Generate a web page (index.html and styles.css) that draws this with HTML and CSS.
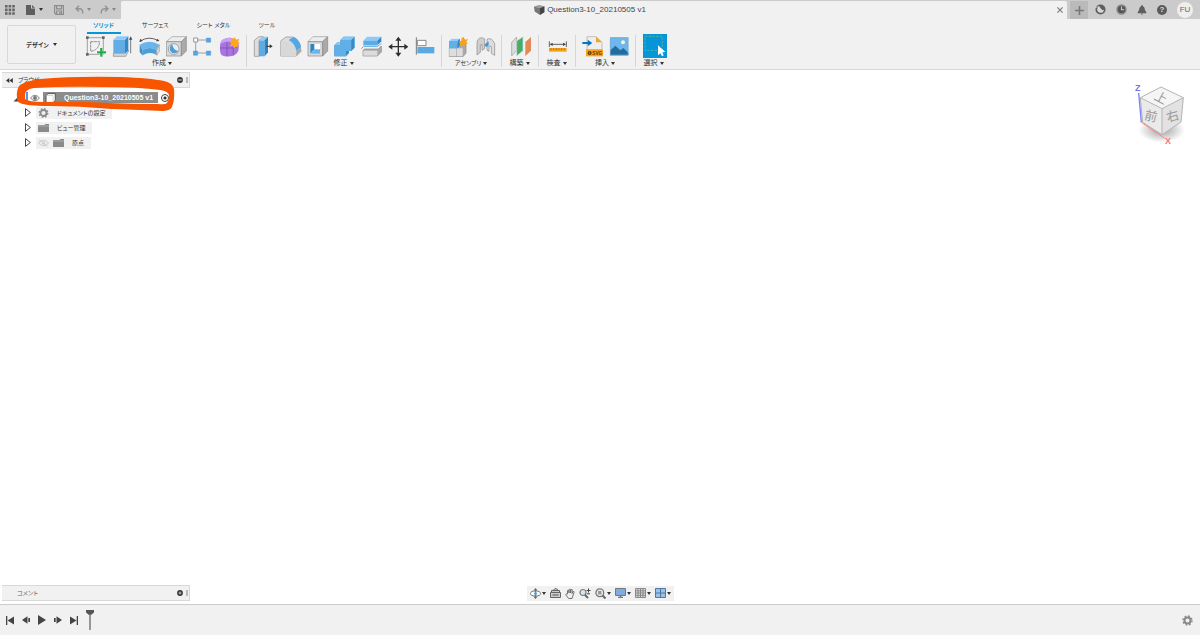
FILE: index.html
```html
<!DOCTYPE html>
<html lang="ja">
<head>
<meta charset="utf-8">
<meta name="viewport" content="width=device-width, initial-scale=1">
<title>Question3-10_20210505 v1</title>
<link rel="stylesheet" href="styles.css">
</head>
<body>
<header class="topbar">
  <div class="quick">
    <button class="ib" aria-label="データ パネル"><svg width="10" height="10" viewBox="0 0 10 10" fill="#666"><path d="M0 0h2.6v2.6H0zM3.6 0h2.6v2.6H3.6zM7.2 0h2.6v2.6H7.2zM0 3.6h2.6v2.6H0zM3.6 3.6h2.6v2.6H3.6zM7.2 3.6h2.6v2.6H7.2zM0 7.2h2.6v2.6H0zM3.6 7.2h2.6v2.6H3.6zM7.2 7.2h2.6v2.6H7.2z"/></svg></button>
    <button class="ib file" aria-label="ファイル"><svg width="9" height="10" viewBox="0 0 9 10" fill="#5e5e5e"><path d="M0 0h5v3.5h4V10H0zM6 0l3 2.8H6z"/></svg><i class="caret"></i></button>
    <button class="ib save" aria-label="保存"><svg width="10" height="10" viewBox="0 0 10 10"><path d="M1 .6h8.4v8.8H2L.6 8V.6zM2.6.6v3.2h4.8V.6M2.6 9.4V6h4.8v3.4M5.8 7v2" fill="none" stroke="#8c8c8c" stroke-width="1.2"/></svg></button>
    <button class="ib" aria-label="元に戻す"><svg width="9" height="9" viewBox="0 0 9 9" fill="none" stroke="#929292" stroke-width="1.4"><path d="M1 3.7h3.6q3.2 0 3.2 4.8M4 .8L1 3.7l3 2.9"/></svg><i class="caret pale"></i></button>
    <button class="ib" aria-label="やり直し"><svg width="9" height="9" viewBox="0 0 9 9" fill="none" stroke="#929292" stroke-width="1.4"><path d="M8 3.7H4.4Q1.2 3.7 1.2 8.5M5 .8l3 2.9-3 2.9"/></svg><i class="caret pale"></i></button>
  </div>
  <div class="doc-tab">
    <span class="doc-title"><svg width="11" height="10" viewBox="0 0 11 10"><path d="M0 1.5L5 0l5.5 1.2L6 3z" fill="#999"/><path d="M0 1.5L6 3v7L.6 6.6z" fill="#777"/><path d="M6 3l4.5-1.8v6L6 10z" fill="#444"/></svg>Question3-10_20210505 v1</span>
    <button class="ib close" aria-label="閉じる"><svg width="6" height="6" viewBox="0 0 6 6" stroke="#777" stroke-width="1.1"><path d="M.4.4l5.2 5.2M5.6.4L.4 5.6"/></svg></button>
  </div>
  <div class="account">
    <button class="ib add" aria-label="新規デザイン"><svg width="9" height="9" viewBox="0 0 9 9" stroke="#777" stroke-width="1.6"><path d="M4.5 0v9M0 4.5h9"/></svg></button>
    <button class="ib" aria-label="拡張機能"><svg width="11" height="11" viewBox="0 0 11 11"><circle cx="5.5" cy="5.5" r="4.2" fill="#d8d8d8" stroke="#5e5e5e" stroke-width="1.7"/><path d="M4 1l5 1 1 3.2-2.5 1L5.3 4z" fill="#5e5e5e"/><path d="M1.5 3.5L4 2.6" stroke="#ccc"/></svg></button>
    <button class="ib" aria-label="ジョブ ステータス"><svg width="11" height="11" viewBox="0 0 11 11"><circle cx="5.5" cy="5.5" r="4.5" fill="#555" stroke="#8c8c8c" stroke-width="1.4"/><path d="M5.5 2.6v3.2h2.6" fill="none" stroke="#ccc" stroke-width="1.1"/></svg></button>
    <button class="ib" aria-label="通知"><svg width="10" height="10" viewBox="0 0 10 10" fill="#5e5e5e"><path d="M5 0q.8 0 .8 1Q7.8 1.800 8 5l1.400 2.600v.6H.6v-.6L2 5q.2-3.200 2.200-4Q4.200 0 5 0zM3.800 8.800h2.400Q5 10.600 3.800 8.800z"/></svg></button>
    <button class="ib help" aria-label="ヘルプ">?</button>
    <button class="ib avatar" aria-label="アカウント">FU</button>
  </div>
</header>

<section class="ribbon">
  <button class="workspace">デザイン<i class="caret"></i></button>
  <div class="tools">
    <nav class="tabs">
      <button class="tab active">ソリッド</button>
      <button class="tab">サーフェス</button>
      <button class="tab">シート メタル</button>
      <button class="tab">ツール</button>
    </nav>
    <div class="groups">
      <div class="group">
        <div class="icons">
          <button class="tool" aria-label="スケッチを作成"><svg viewBox="255 102 66 66"><path d="M262 110h48v50h-48z" fill="none" stroke="#777" stroke-width="2"/><path d="M272 122v29q24-3 27-29z" fill="none" stroke="#777" stroke-width="2.500" stroke-dasharray="8 2"/><path d="M258 106h8v8h-8zM306 106h8v8h-8zM258 156h8v8h-8z" fill="#666"/><path d="M304 141v27M290 154h28" stroke="#fff" stroke-width="10"/><path d="M304 141v26M291 154h27" stroke="#25a84a" stroke-width="7"/></svg></button>
          <button class="tool" aria-label="押し出し"><svg viewBox="336 102 66 66"><path d="M340 158l10-9h36l-9 17h-37z" fill="#d4d4d4" stroke="#888" stroke-width="2"/><path d="M340 116h35v42h-35z" fill="#62ade5"/><path d="M340 116l11-10h34l-10 10z" fill="#8acbfa"/><path d="M375 116l10-10v42l-10 10z" fill="#3289c6"/><path d="M392 114v43" stroke="#444" stroke-width="2"/><path d="M392 106l5 10h-10z" fill="#444"/></svg></button>
          <button class="tool" aria-label="回転"><svg viewBox="417 102 66 66"><path d="M420 121q26-18 55-2" fill="none" stroke="#444" stroke-width="2.500"/><path d="M418 123l3-10 7 7zM478 120l-10 1 5-8z" fill="#444"/><path d="M419 131q29-18 59 0l-8 16q-22-12-42 0z" fill="#68b4eb"/><path d="M419 131l9 16v17l-9-11z" fill="#428fc8"/><path d="M428 147q20-12 42 0v15q-20-12-42 1z" fill="#4a9fd9"/><path d="M470 147l8-16v20l-8 12z" fill="#ddd" stroke="#999" stroke-width="2"/></svg></button>
          <button class="tool" aria-label="穴"><svg viewBox="498 102 66 66"><path d="M499 122l17-15h43l-15 15z" fill="#ededed" stroke="#999" stroke-width="2"/><path d="M499 122h45v43h-45z" fill="#d7d7d7" stroke="#888" stroke-width="2"/><path d="M544 122l15-15v43l-15 15z" fill="#aaa" stroke="#888" stroke-width="2"/><circle cx="521" cy="144" r="16" fill="#eee" stroke="#888" stroke-width="2"/><path d="M517 130q2 18 18 20A14 14 0 1 1 517 130z" fill="#4b9eda"/></svg></button>
          <button class="tool" aria-label="パターン"><svg viewBox="579 102 66 66"><path d="M593 117h26M587 124v27M593 156h26" stroke="#777" stroke-width="2"/><path d="M581 111h12v12h-12z" fill="#fff" stroke="#666" stroke-width="2"/><path d="M619 111h13v13h-13zM580 150h13v13h-13zM619 150h13v13h-13z" fill="#55a7e3" stroke="#3286bf"/></svg></button>
          <button class="tool" aria-label="フォームを作成"><svg viewBox="660 102 66 66"><path d="M668 116q19-10 35-2 12 3 13 18 3 24-14 31-20 7-37 0-6-5-5-24 0-19 8-23z" fill="#a874df"/><path d="M668 116q15-9 32-3l-5 10q-17-4-33 5 1-9 6-12z" fill="#c9a1f5"/><path d="M660 141h40l16-6M681 124v42M700 122v42" fill="none" stroke="#7747ae" stroke-width="2"/><path d="M704 107l4 9 10-3-4 10 5 3-6 5 3 8-9-2-5 6-3-8-10 1 5-9-6-5 8-3-2-9 8 4z" fill="#ffa51f"/></svg></button>
        </div>
        <button class="label">作成<i class="caret"></i></button>
      </div>
      <div class="group">
        <div class="icons">
          <button class="tool" aria-label="プレス/プル"><svg viewBox="39 102 66 66"><path d="M43 118l13-11h14l-13 11v48H43z" fill="#dedede" stroke="#888" stroke-width="2"/><path d="M57 118h17v48H57z" fill="#5babe4"/><path d="M57 118l13-11h14l-10 11z" fill="#8acbfa"/><path d="M74 118l10-11v47l-10 12z" fill="#2d84bf"/><path d="M79 136h12" stroke="#333" stroke-width="3"/><path d="M98 136l-9-6v12z" fill="#333"/></svg></button>
          <button class="tool" aria-label="フィレット"><svg viewBox="120 102 66 66"><path d="M122 120l16-12h17q27 4 28 43l-14 14h-47z" fill="#ddd" stroke="#888" stroke-width="2"/><path d="M122 120h18q26 4 29 30v15h-47z" fill="#d8d8d8"/><path d="M146 117l15-10q20 11 22 32l-14 10q-4-22-23-32z" fill="#54a7e5"/><path d="M169 149l14-10v12l-14 14z" fill="#aaa"/></svg></button>
          <button class="tool" aria-label="シェル"><svg viewBox="201 102 66 66"><path d="M204 122l15-15h44l-15 15z" fill="#eee" stroke="#999" stroke-width="2"/><path d="M204 122h44v43h-44z" fill="#d8d8d8" stroke="#888" stroke-width="2"/><path d="M248 122l15-15v43l-15 15z" fill="#aaa" stroke="#888" stroke-width="2"/><path d="M211 129h29v29h-29z" fill="#fff"/><path d="M211 129h12v16l-12 13z" fill="#2f85c2"/><path d="M211 158l12-13h17v13z" fill="#67b5ee"/></svg></button>
          <button class="tool" aria-label="結合"><svg viewBox="282 102 66 66"><path d="M283 133l10-10h8v-6l10-10h33v33l-10 10h-7v6l-9 10h-35z" fill="#348bc9"/><path d="M283 133h18v-16h33v33h-16v16h-35z" fill="#61afe7"/><path d="M301 117l10-10h33l-10 10zM283 133l10-10h8v10z" fill="#86c7f7"/></svg></button>
          <button class="tool" aria-label="面を分割"><svg viewBox="363 102 66 66"><path d="M370 119l11-12h43l-12 12z" fill="#8acbfa"/><path d="M370 119h42v14h-42z" fill="#5dabe4"/><path d="M412 119l12-12v14l-12 12z" fill="#3188c6"/><path d="M364 143l7-7h42l11-9" fill="none" stroke="#5dabe4" stroke-width="3"/><path d="M369 149l4-5h42l9-9v18l-12 12h-43z" fill="#aaa" stroke="#888" stroke-width="2"/><path d="M370 149h42v15h-42z" fill="#dcdcdc"/></svg></button>
          <button class="tool" aria-label="移動"><svg viewBox="444 102 66 66"><path d="M475 116v42M454 137h42" stroke="#2e2e2e" stroke-width="4"/><path d="M475 107l9 12h-18zM475 167l-9-12h18zM445 137l12-9v18zM505 137l-12-9v18z" fill="#2e2e2e"/></svg></button>
          <button class="tool" aria-label="位置合わせ"><svg viewBox="525 102 66 66"><path d="M529 109v52" stroke="#777" stroke-width="3"/><path d="M532 118h26v16h-26z" fill="#fff" stroke="#888" stroke-width="3"/><path d="M532 138h51v19h-51z" fill="#58a9e4"/></svg></button>
        </div>
        <button class="label">修正<i class="caret"></i></button>
      </div>
      <div class="group">
        <div class="icons">
          <button class="tool" aria-label="新規コンポーネント"><svg viewBox="24 102 66 66"><path d="M28 142l8-12h42v26l-9 11H28z" fill="#aaa" stroke="#888" stroke-width="2"/><path d="M28 142h20v24H28zM50 142h18v24H50z" fill="#ddd"/><path d="M27 120h25v22H27z" fill="#62afe7"/><path d="M27 120l8-7h25l-8 7z" fill="#91ceff"/><path d="M52 120l8-7v21l-8 8z" fill="#3288c5"/><path d="M71 108l4 8 9-2-5 9 5 5-9 2-2 8-7-5-8 3 2-9-4-5 8-3 1-8z" fill="#f5a21f"/></svg></button>
          <button class="tool" aria-label="ジョイント"><svg viewBox="105 102 66 66"><path d="M111 126q0-14 14-16l9 4v29l-8 5v-18l-5 2v22l-10 8z" fill="#cfcfcf" stroke="#888" stroke-width="2"/><path d="M142 114q14-5 22 14v35l-10-6v-20l-7-2v16l-6-3z" fill="#ddd" stroke="#888" stroke-width="2"/><path d="M133 133l6-8 7-3v11l-7 5z" fill="#4298d5"/></svg></button>
        </div>
        <button class="label kana">アセンブリ<i class="caret"></i></button>
      </div>
      <div class="group">
        <div class="icons">
          <button class="tool" aria-label="オフセット平面"><svg viewBox="208 102 66 66"><path d="M213 124l15-16v40l-15 17z" fill="#ddd" stroke="#999" stroke-width="2"/><path d="M228 120l19-13v42l-19 16z" fill="#43ad69" stroke="#ddd" stroke-width="2"/><path d="M254 123l17-15v41l-17 16z" fill="#e18a58"/></svg></button>
        </div>
        <button class="label">構築<i class="caret"></i></button>
      </div>
      <div class="group">
        <div class="icons">
          <button class="tool" aria-label="計測"><svg viewBox="321 102 66 66"><path d="M328 121v17M379 121v17M332 130h43" stroke="#444" stroke-width="2.500"/><path d="M329 130l9-5v10zM378 130l-9-5v10z" fill="#444"/><path d="M327 141h53v11h-53z" fill="#f2a21d"/><path d="M333 142v5M341 142v4M349 142v5M357 142v4M365 142v5M373 142v4" stroke="#865411" stroke-width="2"/></svg></button>
        </div>
        <button class="label">検査<i class="caret"></i></button>
      </div>
      <div class="group">
        <div class="icons">
          <button class="tool" aria-label="SVGを挿入"><svg viewBox="429 102 66 66"><path d="M444 107h27l18 17v22h-45z" fill="#eee" stroke="#aaa" stroke-width="2"/><path d="M471 107v17h18z" fill="#f4a321"/><path d="M430 126h17" stroke="#0876bd" stroke-width="6"/><path d="M460 126l-14-10v20z" fill="#0876bd"/><path d="M441 145h51v21h-51z" fill="#f6a21d"/><circle cx="452" cy="156" r="4" fill="none" stroke="#5b3a08" stroke-width="4"/><text x="460" y="161" class="svg-mark">SVG</text></svg></button>
          <button class="tool" aria-label="キャンバス"><svg viewBox="510 102 66 66"><path d="M513 109h55v54h-55z" fill="#6db7ee"/><circle cx="552" cy="124" r="6" fill="#fff3bd"/><path d="M513 149l16-15 15 14 9-7 15 14v8h-55z" fill="#236c9e"/><path d="M514 110h53v52h-53z" fill="none" stroke="#77a9cc" stroke-width="2"/></svg></button>
        </div>
        <button class="label">挿入<i class="caret"></i></button>
      </div>
      <div class="group last">
        <div class="icons">
          <button class="tool select" aria-label="選択ツール"><svg viewBox="610 100 72 72"><path d="M616 107h52v42h-52z" fill="none" stroke="#54b99c" stroke-width="2.500" stroke-dasharray="7 4"/><path d="M655 134v30l7-6 5 9 5-3-4-9 9-1z" fill="#fff"/></svg></button>
        </div>
        <button class="label">選択<i class="caret"></i></button>
      </div>
    </div>
  </div>
</section>

<main class="canvas">
  <aside class="browser">
    <div class="panel">
      <button class="ib" aria-label="折りたたむ"><svg width="7" height="5" viewBox="0 0 7 5" fill="#333"><path d="M3.300 0v5L0 2.500zM6.800 0v5L3.500 2.500z"/></svg></button>
      <span class="panel-name">ブラウザ</span>
      <button class="ib" aria-label="表示を縮小"><svg width="6" height="6" viewBox="0 0 6 6"><circle cx="3" cy="3" r="2.900" fill="#333"/><path d="M1.300 3h3.400" stroke="#ddd"/></svg></button>
      <i class="grip"></i>
    </div>
    <ul class="tree">
      <li class="root">
        <svg width="8" height="8" viewBox="0 0 8 8"><path d="M7.500.5v7H.5z" fill="#444"/></svg>
        <i class="mark"></i>
        <svg width="10" height="8" viewBox="0 0 10 8"><path d="M.5 4q4.500-5.500 9 0-4.500 5.500-9 0z" fill="#eee" stroke="#888"/><circle cx="5" cy="4" r="1.900" fill="#777"/></svg>
        <span class="doc-node"><svg width="11" height="10" viewBox="0 0 11 10"><path d="M1 2.500L3 .6h7.300v6.600L8.400 9.500H1z" fill="#fff" stroke="#555"/><path d="M1 2.500h7.200v7" fill="none" stroke="#bbb" stroke-width=".6"/></svg>Question3-10_20210505 v1</span>
        <input type="radio" aria-label="コンポーネントをアクティブ化" checked>
      </li>
      <li>
        <svg width="6" height="9" viewBox="0 0 6 9"><path d="M.5.6v7.800L5.400 4.500z" fill="#fff" stroke="#444"/></svg>
        <span class="node"><svg width="11" height="10" viewBox="0 0 11 10"><circle cx="5.500" cy="5" r="3" fill="none" stroke="#8c8c8c" stroke-width="1.800"/><circle cx="5.500" cy="5" r="4.300" fill="none" stroke="#8c8c8c" stroke-width="1.300" stroke-dasharray="1.700 1.677"/></svg><span class="wide">ドキュメントの設定</span></span>
      </li>
      <li>
        <svg width="6" height="9" viewBox="0 0 6 9"><path d="M.5.6v7.800L5.400 4.500z" fill="#fff" stroke="#444"/></svg>
        <span class="node"><svg width="11" height="8" viewBox="0 0 11 8"><path d="M0 1h6.500l1-1H11v8H0z" fill="#8a8a8a"/><path d="M0 2h11" stroke="#bbb" stroke-width=".7"/></svg><span class="wide">ビュー管理</span></span>
      </li>
      <li>
        <svg width="6" height="9" viewBox="0 0 6 9"><path d="M.5.6v7.800L5.400 4.500z" fill="#fff" stroke="#444"/></svg>
        <span class="node"><svg width="11" height="8" viewBox="0 0 11 8" fill="none" stroke="#ccc"><path d="M.5 4q5-5.500 10 0-5 5.500-10 0zM1 .6l8.500 7"/><circle cx="5.500" cy="4" r="1.300"/></svg><svg class="second" width="11" height="8" viewBox="0 0 11 8"><path d="M0 1h6.500l1-1H11v8H0z" fill="#8a8a8a"/><path d="M0 2h11" stroke="#bbb" stroke-width=".7"/></svg><span class="wide">原点</span></span>
      </li>
    </ul>
    <svg class="marker" width="162" height="38" viewBox="0 0 162 38"><path fill-rule="evenodd" fill="#f75500" d="M3 23Q2 14 6 10Q12 6 26 4Q60 1 106 2Q136 3 150 6Q159 8 160 14Q161 24 158 32Q156 36 148 36Q128 35 98 34Q66 31 34 31Q12 31 6 28Q3 27 3 23ZM11 19Q12 14 20 13Q50 11 90 12Q124 12 146 15Q154 16 155 20Q155 25 153 28Q151 30 144 29Q120 29 94 28Q60 26 30 27Q14 27 11 24Z"/></svg>
  </aside>

  <svg class="cube" width="56" height="70" viewBox="0 0 168 210">
    <defs><radialGradient id="shade"><stop offset="0" stop-color="#777" stop-opacity=".7"/><stop offset="1" stop-color="#777" stop-opacity="0"/></radialGradient></defs>
    <ellipse cx="86" cy="144" rx="70" ry="38" fill="url(#shade)"/>
    <path d="M22 47l62-32 67 32-64 33z" fill="#f5f5f5"/>
    <path d="M22 47l65 33v78l-58-37z" fill="#eaeaea"/>
    <path d="M87 80l64-33-7 73-57 38z" fill="#e2e2e2"/>
    <path d="M22 47l62-32 67 32-7 73-57 38-58-37zM22 47l65 33 64-33M87 80v78" fill="none" stroke="#b4b4b4" stroke-width="3"/>
    <path d="M17 33l8 88" stroke="#8080ff" stroke-width="4"/>
    <path d="M25 121l70 48" stroke="#ff8585" stroke-width="3"/>
    <g class="face"><text transform="translate(84 48) rotate(28)" y="13">上</text><text transform="translate(54 103) rotate(14)" y="13">前</text><text transform="translate(119 103) rotate(-16)" y="13">右</text></g>
    <text class="axis" x="14" y="27" fill="#7474ee">Z</text><text class="axis" x="105" y="186" fill="#f77474">X</text>
  </svg>

  <footer class="canvas-foot">
    <div class="panel comment">
      <span class="panel-name">コメント</span>
      <button class="ib" aria-label="コメントを追加"><svg width="6" height="6" viewBox="0 0 6 6"><circle cx="3" cy="3" r="2.900" fill="#333"/><path d="M1.500 3h3M3 1.500v3" stroke="#ddd" stroke-width=".8"/></svg></button>
      <i class="grip"></i>
    </div>
    <div class="navbar">
      <button class="ib" aria-label="オービット"><svg width="11" height="11" viewBox="0 0 11 11"><ellipse cx="5.500" cy="5.500" rx="5" ry="2.500" fill="#fff" stroke="#777"/><path d="M5.500 0l2 2.500h-4zM5.500 11l-2-2.500h4z" fill="#666"/><path d="M5.500 2v7" stroke="#777"/><circle cx="5.500" cy="5.500" r="1.500" fill="#529ed0"/></svg><i class="caret"></i></button>
      <button class="ib" aria-label="ビュー正面"><svg width="11" height="10" viewBox="0 0 11 10"><path d="M.5 4.500h10v5H.5zM1.500 4.500v-2h8v2M3 2.500l2-2 3 1" fill="#ccc" stroke="#666"/><path d="M2.500 7h6" stroke="#555"/></svg></button>
      <button class="ib" aria-label="画面移動"><svg width="10" height="11" viewBox="0 0 10 11"><path d="M2.500 6V2.500q1-1 1.200.5l.4 2V1.500q1-1 1.400 0V5l.6-3.500q1-.6 1.200.5L7 5.500l1-2q1.300-.3 1 1L7.500 9l-.5 1.500H3.500L.7 6.600q.3-1.200 1.800-.6z" fill="#eee" stroke="#666" stroke-width=".9"/></svg></button>
      <button class="ib" aria-label="ズーム"><svg width="12" height="11" viewBox="0 0 12 11"><circle cx="4" cy="4.500" r="3" fill="#d7e5ef" stroke="#777" stroke-width="1.200"/><path d="M6 7l3 3" stroke="#666" stroke-width="2"/><path d="M9.500.5v4M7.500 2.500h4M8 5.800h3" stroke="#444"/></svg></button>
      <button class="ib" aria-label="フィット"><svg width="11" height="11" viewBox="0 0 11 11"><circle cx="4.800" cy="4.800" r="3.900" fill="#eee" stroke="#777" stroke-width="1.300"/><path d="M3 3h3.500v3.500H3z" fill="#999"/><path d="M7.500 7.500l3 3" stroke="#666" stroke-width="2"/></svg><i class="caret"></i></button>
      <button class="ib" aria-label="表示設定"><svg width="11" height="10" viewBox="0 0 11 10"><path d="M.5.5h10v7H.5z" fill="#81ace0" stroke="#777"/><path d="M3 9.500h5M5.500 7.500v2" stroke="#777" stroke-width="1.500"/></svg><i class="caret"></i></button>
      <button class="ib" aria-label="グリッド"><svg width="11" height="10" viewBox="0 0 11 10"><path d="M.5.500h10v9H.5zM3 0v10M5.500 0v10M8 0v10M0 2.800h11M0 5h11M0 7.300h11" fill="#ddd" stroke="#888"/></svg><i class="caret"></i></button>
      <button class="ib" aria-label="ビューポート"><svg width="11" height="10" viewBox="0 0 11 10"><path d="M.5.500h10v9H.5zM5.500 0v10M0 5h11" fill="#9bc0ea" stroke="#51779e"/></svg><i class="caret"></i></button>
    </div>
  </footer>
</main>

<footer class="timeline">
  <button class="ib" aria-label="先頭へ"><svg width="8" height="9" viewBox="0 0 8 9" fill="#444"><path d="M0 0h1.300v9H0zM8 .5v8L1.500 4.500z"/></svg></button>
  <button class="ib" aria-label="前へ"><svg width="8" height="8" viewBox="0 0 8 8" fill="#444"><path d="M5.500.3v7.400L0 4zM6.300 2H8v4H6.300z"/></svg></button>
  <button class="ib" aria-label="再生"><svg width="8" height="10" viewBox="0 0 8 10" fill="#444"><path d="M0 0l8 5-8 5z"/></svg></button>
  <button class="ib" aria-label="次へ"><svg width="8" height="8" viewBox="0 0 8 8" fill="#444"><path d="M2.500.3v7.400L8 4zM0 2h1.700v4H0z"/></svg></button>
  <button class="ib" aria-label="最後へ"><svg width="8" height="9" viewBox="0 0 8 9" fill="#444"><path d="M6.700 0H8v9H6.700zM0 .5v8l6.500-4z"/></svg></button>
  <button class="ib" aria-label="履歴マーカー"><svg width="8" height="20" viewBox="0 0 8 20"><path d="M0 0h8v2.500L5 5H3L0 2.500z" fill="#555"/><path d="M4 4v16" stroke="#777" stroke-width="1.500"/></svg></button>
  <button class="ib settings" aria-label="タイムライン設定"><svg width="11" height="11" viewBox="0 0 11 11"><circle cx="5.500" cy="5.500" r="3" fill="none" stroke="#8a8a8a" stroke-width="2"/><circle cx="5.500" cy="5.500" r="4.500" fill="none" stroke="#8a8a8a" stroke-width="1.400" stroke-dasharray="1.800 1.734"/></svg></button>
</footer>
</body>
</html>
```
FILE: styles.css
```css
* { box-sizing: border-box; }

body {
  margin: 0;
  height: 100vh;
  display: flex;
  flex-direction: column;
  background: #fff;
  color: #333;
  font-family: "Liberation Sans", "Noto Sans CJK JP", sans-serif;
  font-size: 6px;
  line-height: 10px;
  font-feature-settings: "palt";
}

button {
  border: 0;
  padding: 0;
  background: none;
  color: inherit;
  font: inherit;
  font-feature-settings: inherit;
}

svg { display: block; flex: none; }

.ib { display: flex; align-items: center; gap: 3px; flex: none; }

.caret {
  border: 2px solid transparent;
  border-top: 3px solid #333;
  border-bottom: 0;
  flex: none;
}
.caret.pale { border-top-color: #888; }

/* Application bar */
.topbar {
  display: flex;
  height: 19px;
  flex: none;
  background: #cbcbcb;
}
.quick {
  width: 121px;
  display: flex;
  align-items: center;
  padding-left: 5px;
  gap: 9px;
}
.quick .file { margin-left: 2px; gap: 4px; }
.quick .save { margin-left: 2px; margin-right: 2px; }
.doc-tab {
  flex: 1;
  display: flex;
  align-items: center;
  margin-top: 1px;
  padding-right: 4px;
  border-radius: 2px 2px 0 0;
  background: #f1f1f1;
}
.doc-title {
  flex: 1;
  display: flex;
  justify-content: center;
  align-items: center;
  gap: 2px;
  padding-left: 2px;
  font-size: 8px;
  color: #444;
}
.account {
  width: 133px;
  display: flex;
  align-items: center;
  gap: 10px;
}
.account .add {
  width: 18px;
  height: 18px;
  margin: 1px -3px 0 3px;
  justify-content: center;
  background: #bababa;
}
.account .help {
  width: 10px;
  height: 10px;
  justify-content: center;
  border-radius: 50%;
  background: #5a5a5a;
  color: #ddd;
  font-size: 8px;
  font-weight: bold;
}
.account .avatar {
  width: 16px;
  height: 16px;
  justify-content: center;
  border-radius: 50%;
  background: #eee;
  color: #666;
  font-size: 8px;
}

/* Ribbon */
.ribbon {
  display: flex;
  flex: none;
  height: 51px;
  padding-left: 7px;
  background: #f1f1f1;
  border-bottom: 1px solid #d8d8d8;
}
.workspace {
  width: 69px;
  height: 39px;
  margin-top: 6px;
  display: flex;
  align-items: center;
  justify-content: center;
  gap: 4px;
  border: 1px solid #d8d8d8;
  border-radius: 2px;
  font-weight: bold;
}
.tools { margin-left: 3px; }
.tabs { display: flex; height: 15px; }
.tab { position: relative; padding: 0 14px 3px; }
.tab.active { color: #0696d7; font-weight: bold; }
.tab.active::after {
  content: "";
  position: absolute;
  left: 8px;
  right: 7px;
  bottom: 0;
  height: 2px;
  background: #0696d7;
}
.groups { display: flex; }
.group {
  position: relative;
  min-width: 37px;
  padding: 0 4px 0 6px;
  display: flex;
  flex-direction: column;
  align-items: center;
  border-right: 1px solid transparent;
}
.group::after {
  content: "";
  position: absolute;
  top: 1px;
  right: -1px;
  width: 1px;
  height: 32px;
  background: #d6d6d6;
}
.group.last::after { display: none; }
.icons { display: flex; align-items: center; height: 23px; gap: 5px; }
.tool { width: 22px; height: 22px; }
.tool svg { width: 100%; height: 100%; }
.tool.select { width: 24px; height: 24px; background: #0696d7; }
.svg-mark { font: bold 14px "Liberation Sans", sans-serif; fill: #5b3a08; }
.label {
  display: flex;
  align-items: center;
  gap: 2px;
  margin-top: 1px;
  padding-right: 3px;
  font-size: 7px;
}
.label.kana { font-size: 6px; }

/* Canvas */
.canvas {
  flex: 1;
  position: relative;
  display: flex;
  flex-direction: column;
  justify-content: space-between;
  min-height: 0;
  padding: 2px 2px 3px;
}
.browser { position: relative; width: 188px; }
.panel {
  width: 188px;
  height: 16px;
  display: flex;
  align-items: center;
  padding: 0 1px 0 4px;
  background: #f1f1f1;
  border: solid #d8d8d8;
  border-width: 1px 1px 1px 0;
}
.panel-name { flex: 1; padding-left: 5px; }
.comment .panel-name { padding-left: 11px; color: #666; }
.grip {
  width: 2px;
  height: 6px;
  margin-left: 3px;
  background: #bbb;
}
.tree { list-style: none; margin: 2px 0 0; padding: 0; }
.tree li { display: flex; align-items: center; height: 15px; padding-left: 23px; gap: 5px; }
.tree .root { padding-left: 11px; gap: 3px; }
.mark { width: 2px; height: 11px; margin: 0 -1px 0 2px; background: #5c8fe8; }
.doc-node {
  display: flex;
  align-items: center;
  gap: 8px;
  height: 11px;
  padding: 0 5px 0 2px;
  background: #8c8c8c;
  color: #fff;
  font-size: 7px;
  font-weight: bold;
  white-space: nowrap;
}
.root input {
  appearance: none;
  flex: none;
  width: 8px;
  height: 8px;
  margin: 0;
  border: 1px solid #444;
  border-radius: 50%;
  background: radial-gradient(circle, #333 0 1px, #fff 2px);
}
.node {
  display: flex;
  align-items: center;
  height: 12px;
  padding: 0 7px 0 2px;
  background: #f1f1f1;
  white-space: nowrap;
}
.node .wide { padding-left: 8px; }
.node .second { margin-left: 4px; }
.marker { position: absolute; left: 12px; top: 3px; pointer-events: none; }
.cube { position: absolute; right: 11px; top: 12px; }
.face { font-size: 38px; fill: #999; text-anchor: middle; }
.axis { font-size: 27px; font-weight: bold; text-anchor: middle; }
.canvas-foot { display: grid; grid-template-columns: 1fr auto 1fr; align-items: center; }
.navbar {
  display: flex;
  align-items: center;
  height: 15px;
  padding: 0 3px;
  gap: 4px;
  background: #f1f1f1;
}
.navbar .ib { gap: 1px; }

/* Timeline */
.timeline {
  flex: none;
  display: flex;
  align-items: center;
  height: 31px;
  padding: 0 7px 0 6px;
  gap: 8px;
  background: #f1f1f1;
  border-top: 1px solid #ccc;
}
.settings { margin-left: auto; }
```
